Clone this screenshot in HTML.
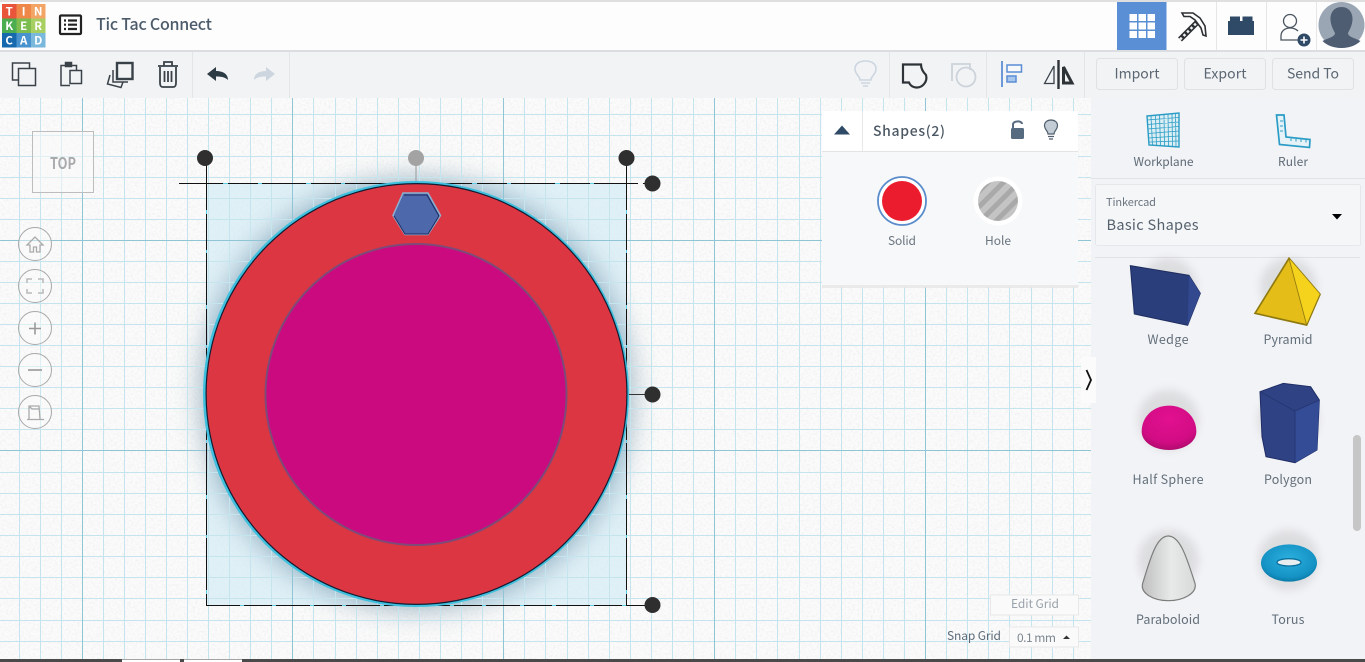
<!DOCTYPE html>
<html><head><meta charset="utf-8"><title>Tic Tac Connect</title>
<style>
html,body{margin:0;padding:0;width:1365px;height:662px;overflow:hidden;background:#f9f9f9}
svg{position:absolute;left:0;top:0;display:block}
text{font-family:"Noto Sans CJK JP","Liberation Sans",sans-serif}
</style></head><body>
<svg width="1365" height="662" viewBox="0 0 1365 662" xmlns="http://www.w3.org/2000/svg">
<defs>
<filter id="noise" x="0" y="0" width="100%" height="100%"><feTurbulence type="fractalNoise" baseFrequency="0.45" numOctaves="2" seed="4"/><feColorMatrix values="0 0 0 0 0.68  0 0 0 0 0.68  0 0 0 0 0.68  0.4 0.4 0 0 -0.34"/></filter>
<filter id="bl" x="-30%" y="-30%" width="160%" height="160%"><feGaussianBlur stdDeviation="14"/></filter>
<pattern id="st" width="11" height="11" patternUnits="userSpaceOnUse" patternTransform="rotate(45)"><rect width="11" height="11" fill="#c4c4c4"/><rect width="5" height="11" fill="#a9a9a9"/></pattern>
<radialGradient id="tor" cx="50%" cy="40%" r="60%"><stop offset="0" stop-color="#2bb0de"/><stop offset=".8" stop-color="#1492c4"/><stop offset="1" stop-color="#0a7aa8"/></radialGradient>
<radialGradient id="hs" cx="50%" cy="30%" r="75%"><stop offset="0" stop-color="#e2108f"/><stop offset=".7" stop-color="#d20c84"/><stop offset="1" stop-color="#a80a68"/></radialGradient>
<linearGradient id="par" x1="0" y1="0" x2="1" y2="0"><stop offset="0" stop-color="#bfbfbf"/><stop offset=".55" stop-color="#e8eaea"/><stop offset="1" stop-color="#d8d9d9"/></linearGradient>
</defs>

<!-- canvas -->
<rect x="0" y="98" width="1091" height="564" fill="#fbfbfb"/>
<rect x="0" y="98" width="1091" height="564" filter="url(#noise)"/>

<!-- selection fill and glow -->
<rect x="206" y="183" width="421" height="422" fill="#cfeaf5" opacity=".6"/>
<circle cx="416.500" cy="394" r="215" fill="#547f98" opacity=".6" filter="url(#bl)"/>

<!-- grid -->
<path shape-rendering="crispEdges" fill="none" stroke="#c4e5ed" stroke-width="1" d="M19.500 98V662M40.500 98V662M61.500 98V662M103.500 98V662M124.500 98V662M145.500 98V662M166.500 98V662M187.500 98V662M208.500 98V662M229.500 98V662M250.500 98V662M271.500 98V662M313.500 98V662M335.500 98V662M356.500 98V662M377.500 98V662M398.500 98V662M419.500 98V662M440.500 98V662M461.500 98V662M482.500 98V662M524.500 98V662M545.500 98V662M567.500 98V662M588.500 98V662M609.500 98V662M630.500 98V662M651.500 98V662M672.500 98V662M693.500 98V662M735.500 98V662M756.500 98V662M777.500 98V662M799.500 98V662M820.500 98V662M841.500 98V662M862.500 98V662M883.500 98V662M904.500 98V662M946.500 98V662M967.500 98V662M988.500 98V662M1009.500 98V662M1031.500 98V662M1052.500 98V662M1073.500 98V662
M0 114.500H1091M0 135.500H1091M0 156.500H1091M0 177.500H1091M0 198.500H1091M0 219.500H1091M0 261.500H1091M0 282.500H1091M0 303.500H1091M0 324.500H1091M0 345.500H1091M0 366.500H1091M0 387.500H1091M0 408.500H1091M0 429.500H1091M0 472.500H1091M0 493.500H1091M0 514.500H1091M0 535.500H1091M0 556.500H1091M0 577.500H1091M0 598.500H1091M0 620.500H1091M0 641.500H1091"/>
<path shape-rendering="crispEdges" fill="none" stroke="#8fc5d5" stroke-width="1" d="M82.500 98V662M292.500 98V662M503.500 98V662M714.500 98V662M925.500 98V662M0 240.500H1091M0 450.500H1091"/>

<!-- selection lines -->
<g fill="none" stroke-width="1" shape-rendering="crispEdges">
<path d="M206.500 183.500H626.500M206.500 183.500V605.500M626.500 183.500V605.500M206.500 605.500H626.500" stroke="#5fd0e6"/>
<path d="M179 183.500H652" stroke="#111" stroke-dasharray="44 5 30 4"/>
<path d="M206.500 158V606" stroke="#111" stroke-dasharray="52 4 36 3"/>
<path d="M626.500 158V606" stroke="#111" stroke-dasharray="52 4 36 3"/>
<path d="M206 605.500H652" stroke="#111" stroke-dasharray="34 4 28 4"/>
<path d="M627 394.500H652" stroke="#333"/>
</g>
<path d="M416 165V183" stroke="#999" stroke-width="1"/>
<circle cx="416" cy="394" r="213" fill="#3fc0de"/>
<circle cx="416.500" cy="394" r="211" fill="#111d33"/>
<circle cx="416.500" cy="394" r="209.800" fill="#dc3642"/>
<circle cx="416" cy="394.500" r="150.500" fill="#cb0a80" stroke="#7e4a78" stroke-width="2"/>
<path d="M403 193H428L440.500 215.500L428 234.500H405L393 215.500Z" fill="#4d68ab" stroke="#8fb0cf" stroke-width="1.500"/>
<path d="M404 195H427L439 216L428 234H405L394 216" fill="none" stroke="#1b2a60" stroke-width="1"/>
<g fill="#2f2f2f"><circle cx="205" cy="158" r="8"/><circle cx="626.500" cy="158" r="8"/><circle cx="652.500" cy="183.500" r="8"/><circle cx="652.500" cy="394.500" r="8"/><circle cx="652.500" cy="605" r="8"/></g>
<circle cx="416" cy="158" r="8" fill="#a3a3a3"/>

<!-- view cube + controls -->
<rect x="32.500" y="131.500" width="61" height="61" fill="#fafafa" fill-opacity=".5" stroke="#bdbdbd"/>
<text x="63" y="169" font-size="16" font-weight="700" fill="#a8aaac" text-anchor="middle" textLength="26" lengthAdjust="spacingAndGlyphs">TOP</text>
<g fill="#fafafa" fill-opacity=".45" stroke="#a8a8a8"><circle cx="35" cy="244" r="16.500"/><circle cx="35" cy="286" r="16.500"/><circle cx="35" cy="328" r="16.500"/><circle cx="35" cy="370" r="16.500"/><circle cx="35" cy="412" r="16.500"/></g>
<g fill="none" stroke="#aaa" stroke-width="1.300">
<path d="M27 245L35 237L43 245H40V252H36.500V247H33.500V252H30V245Z"/>
<path d="M27 283V279H32M38 279H43V283M43 289V293H38M32 293H27V289" stroke="#bbb" stroke-width="1.600"/>
<path d="M29 328.500H41M35 322.500V334.500" stroke="#999" stroke-width="1.600"/>
<path d="M28 370H42" stroke="#999" stroke-width="1.600"/>
<path d="M27 419.500H44M29 419V406H39L40 419M29 406L32 409H39" />
</g>

<!-- grid controls -->
<rect x="990.500" y="595" width="88" height="20" fill="#fafafa" stroke="#e8e8e8"/>
<text x="1035" y="608" font-size="12" fill="#9aa3ac" text-anchor="middle" textLength="48">Edit Grid</text>
<text x="947" y="640" font-size="12" fill="#5d6b78" textLength="54">Snap Grid</text>
<rect x="1009.500" y="627" width="69" height="20" fill="#fafafa" stroke="#e8e8e8"/>
<text x="1017" y="642" font-size="12" fill="#7d8790" textLength="39">0.1 mm</text>
<path d="M1063 639L1066.500 635.500L1070 639Z" fill="#333"/>

<!-- header -->
<rect x="0" y="0" width="1365" height="51" fill="#fdfdfd"/>
<rect x="0" y="0" width="1365" height="2" fill="#dfdfdf"/>
<rect x="0" y="50" width="1365" height="2" fill="#dcdde0"/>
<!-- logo -->
<g font-size="11.500" font-weight="700" fill="#fff" text-anchor="middle">
<rect x="2" y="4" width="14.500" height="14.500" fill="#e8553a"/><rect x="16.500" y="4" width="14.500" height="14.500" fill="#ef8748"/><rect x="31" y="4" width="14.500" height="14.500" fill="#f3a566"/>
<rect x="2" y="18.500" width="14.500" height="14.500" fill="#4cac50"/><rect x="16.500" y="18.500" width="14.500" height="14.500" fill="#7dbd4f"/><rect x="31" y="18.500" width="14.500" height="14.500" fill="#a8cf62"/>
<rect x="2" y="33" width="14.500" height="14.500" fill="#1769ad"/><rect x="16.500" y="33" width="14.500" height="14.500" fill="#4893ce"/><rect x="31" y="33" width="14.500" height="14.500" fill="#7ab8dc"/>
<text x="9.200" y="15.500">T</text><text x="23.700" y="15.500">I</text><text x="38.200" y="15.500">N</text>
<text x="9.200" y="30">K</text><text x="23.700" y="30">E</text><text x="38.200" y="30">R</text>
<text x="9.200" y="44.500">C</text><text x="23.700" y="44.500">A</text><text x="38.200" y="44.500">D</text>
</g>
<rect x="60" y="15.500" width="21" height="18.500" rx="1" fill="none" stroke="#222" stroke-width="2.200"/>
<path d="M64 20.500H66M68 20.500H77M64 24.700H66M68 24.700H77M64 29H66M68 29H77" stroke="#222" stroke-width="2.200"/>
<text x="96" y="30" font-size="16" font-weight="500" fill="#4c5b6a" textLength="116">Tic Tac Connect</text>

<!-- header right -->
<path d="M1216.500 2V50M1266.500 2V50M1316.500 2V50" stroke="#e6e6e6"/>
<rect x="1117" y="2" width="49.500" height="48" fill="#5a8ed5"/>
<g fill="#fff"><rect x="1129.500" y="14" width="7.500" height="7"/><rect x="1138.500" y="14" width="7.500" height="7"/><rect x="1147.500" y="14" width="7.500" height="7"/><rect x="1129.500" y="22.500" width="7.500" height="7"/><rect x="1138.500" y="22.500" width="7.500" height="7"/><rect x="1147.500" y="22.500" width="7.500" height="7"/><rect x="1129.500" y="31" width="7.500" height="7"/><rect x="1138.500" y="31" width="7.500" height="7"/><rect x="1147.500" y="31" width="7.500" height="7"/></g>
<path d="M1180 39.500L1197 22.500" stroke="#2c2f33" stroke-width="5.500"/><path d="M1180 39.500L1197 22.500" stroke="#f2f2f2" stroke-width="2.500" stroke-dasharray="2.500 2.500"/>
<path d="M1182 13H1193L1200 18L1205 26L1206 36L1203 35L1201 28L1195 20L1190 16.500H1184Z" fill="#fff" stroke="#2c2f33" stroke-width="1.600"/>
<path d="M1228 21H1230V16.500H1240V21H1242.500V16.500H1252.500V21H1254V35H1228Z" fill="#2f4a66"/>
<circle cx="1290" cy="21" r="6.500" fill="none" stroke="#4a5560" stroke-width="1.300"/>
<path d="M1301 40H1281V36C1281 31 1285 28 1290 28C1293 28 1296 29 1298 31" fill="none" stroke="#4a5560" stroke-width="1.300"/>
<circle cx="1304" cy="40" r="6.500" fill="#2f4a66"/><path d="M1300.500 40H1307.500M1304 36.500V43.500" stroke="#fff" stroke-width="1.600"/>
<circle cx="1341.500" cy="25" r="23" fill="#9aa6b4"/>
<path d="M1341.500 7C1334 7 1330 13 1330.500 20C1331 26 1333.500 30 1335 33C1335 37 1328 38 1322.500 41C1327 45.500 1334 48 1341.500 48C1349 48 1356 45.500 1360.500 41C1355 38 1348 37 1348 33C1349.500 30 1352 26 1352.500 20C1353 13 1349 7 1341.500 7Z" fill="#4f5d73"/>

<!-- toolbar -->
<rect x="0" y="52" width="1365" height="46" fill="#f2f3f5"/>
<path d="M192.500 52V98M289.500 52V98M889.500 52V98M986.500 52V98M1084.500 52V98" stroke="#e4e5e8"/>
<g fill="none" stroke="#3a4249" stroke-width="1.500">
<rect x="12.500" y="63" width="17" height="17"/><rect x="18.500" y="68.500" width="17" height="17" fill="#f2f3f5"/>
<path d="M76.500 70V65.500H61V85.500H70"/><rect x="70" y="70.500" width="11.500" height="13"/><rect x="65.500" y="62.500" width="6" height="4" fill="#3a4249"/>
<path d="M110 75L107.500 84L121 87.500L123 82" /><path d="M113 70V82H128"/><rect x="117" y="63" width="15.500" height="16" stroke-width="2.400"/>
<path d="M158 66H178M160 67V83C160 86 161 87 163 87H173C175 87 176 86 176 83V67M164 66V62H172V66M164.500 71V82M168 71V82M171.500 71V82" stroke-width="1.800"/>
</g>
<path d="M207 74L216 67V71C223 71 228 74 228 80C225 77 221 76.500 216 76.500V81Z" fill="#2d3b45"/>
<path d="M275 74L266 67V71C259 71 254 74 254 80C257 77 261 76.500 266 76.500V81Z" fill="#cdd6de"/>
<!-- right toolbar icons -->
<g fill="none" stroke="#ccd6e0" stroke-width="1.600"><path d="M860 80C860 76 855 74.500 855 69C855 64 859 61 865.500 61C872 61 876 64 876 69C876 74.500 871 76 871 80Z"/><path d="M861 83H870M863 86H868"/></g>
<path d="M903 64.500H921C921 69 923 72 926 75C928 82 922 88 916 87.500C912 87 910 85 909 82.500H903Z" fill="none" stroke="#2e3338" stroke-width="2.200"/>
<g fill="none" stroke="#ccd3da" stroke-width="1.800"><path d="M952 81V64H970V70"/><circle cx="966" cy="77" r="9.500"/></g>
<path d="M1002 61V87" stroke="#5a8ed5" stroke-width="1.800"/><rect x="1007" y="65" width="14.500" height="7" fill="#fff" fill-opacity=".4" stroke="#5a8ed5" stroke-width="1.500"/><rect x="1007" y="76" width="9" height="6" fill="#a9c6ec" stroke="#5a8ed5" stroke-width="1.500"/>
<path d="M1058.500 60V89" stroke="#2e3338" stroke-width="2.400"/><path d="M1044.500 83.500L1054 66V83.500Z" fill="none" stroke="#3a4249" stroke-width="1.300"/><path d="M1063.500 67V83H1072Z" fill="#f2f3f5" stroke="#2e3338" stroke-width="3"/>
<g fill="#f2f3f5" stroke="#e0e1e4"><rect x="1096.500" y="58.500" width="81" height="31" rx="3"/><rect x="1184.500" y="58.500" width="81" height="31" rx="3"/><rect x="1272.500" y="58.500" width="81" height="31" rx="3"/></g>
<g font-size="14" fill="#5a6672" text-anchor="middle"><text x="1137" y="78.500" textLength="45">Import</text><text x="1225" y="78.500" textLength="43">Export</text><text x="1313" y="78.500" textLength="52">Send To</text></g>

<!-- inspector -->
<rect x="822" y="111" width="256" height="176" fill="#f7f8f9"/>
<rect x="822" y="285" width="256" height="3" fill="#e4e4e4" opacity=".7"/>
<rect x="822" y="111" width="256" height="40" fill="#fff"/>
<path d="M822 151.500H1078" stroke="#e3e4e6"/><path d="M862.500 111V151" stroke="#e8e8e8"/>
<path d="M834 134.500L842 125.500L850 134.500Z" fill="#2f4a66"/>
<text x="873" y="136" font-size="14" font-weight="500" fill="#4b5763" textLength="72">Shapes(2)</text>
<rect x="1011" y="128" width="13" height="11" rx="1.500" fill="#566a80"/><path d="M1013 128V124.500C1013 120.500 1022 120.500 1022 124" fill="none" stroke="#566a80" stroke-width="2"/>
<path d="M1048 134C1048 131 1044.500 129.500 1044.500 125.500C1044.500 122 1047.500 120 1051 120C1054.500 120 1057.500 122 1057.500 125.500C1057.500 129.500 1054 131 1054 134Z" fill="#c3ccd4" stroke="#4f5e6d" stroke-width="1.200"/><path d="M1048 136.500H1054M1049 139H1053" stroke="#4f5e6d" stroke-width="1.200"/>
<circle cx="902" cy="201" r="24" fill="#fff" stroke="#5a8ccb" stroke-width="1.800"/><circle cx="902" cy="201" r="20" fill="#ec1c2f"/>
<circle cx="998" cy="201" r="24.500" fill="#fff"/><circle cx="998" cy="201" r="20" fill="url(#st)"/>
<g font-size="12" fill="#6a7580" text-anchor="middle"><text x="902" y="245" textLength="28">Solid</text><text x="998" y="245" textLength="26">Hole</text></g>

<!-- right panel -->
<rect x="1091" y="98" width="274" height="564" fill="#f2f3f6"/>
<rect x="1081" y="357" width="15" height="46" fill="#fbfbfb"/>
<path d="M1086.500 370L1091 380L1086.500 390" fill="none" stroke="#111" stroke-width="1.800"/>
<g fill="none" stroke="#2a9cc5" stroke-width="1.400">
<path d="M1147 116L1179 113V147L1149 145Z" fill="#dbeef4"/>
<path d="M1147 120L1179 117.500M1147.300 124.500L1179 122M1147.500 129L1179 126.500M1148 133.500L1179 131M1148.200 138L1179 136M1148.500 142L1179 141M1151 115.800L1152.500 145.500M1155.500 115.500L1156.500 146M1159.500 115L1160.500 146M1164 114.800L1164.500 146M1168 114.200L1168.500 146.500M1172 114L1172.500 146.500M1175.500 113.500L1176 147" stroke-width=".8"/>
</g>
<path d="M1276.500 115H1284L1286 137L1310 139.500L1309.500 147.500L1279.500 144.500Z" fill="#e5f2f7" stroke="#2a9cc5" stroke-width="1.700"/>
<path d="M1280 121H1283M1280 126H1283M1280 131H1283M1291 141V138.500M1296 141.500V139M1301 142V139.500M1306 142.500V140" stroke="#2a9cc5" stroke-width="1"/>
<g font-size="12" fill="#5f6b77" text-anchor="middle"><text x="1163.500" y="166" textLength="60">Workplane</text><text x="1293" y="166" textLength="30">Ruler</text></g>
<path d="M1091 178.500H1365" stroke="#e1e2e5"/>
<rect x="1095.500" y="184.500" width="265" height="61" rx="2" fill="#f5f6f8" stroke="#e6e7ea"/>
<text x="1106" y="206" font-size="11" fill="#6a7580" textLength="50">Tinkercad</text>
<text x="1106.500" y="230" font-size="14.500" fill="#55616d" textLength="92">Basic Shapes</text>
<path d="M1332 214H1342L1337 219.500Z" fill="#000"/>
<path d="M1095 257.500H1360" stroke="#e1e2e5"/>
<rect x="1353" y="435" width="8" height="96" rx="4" fill="#c6c6c6"/>

<!-- shape thumbnails, drawn at 3x -->
<g transform="translate(1090 250) scale(.33333)">
<g fill="#000" opacity=".09" filter="url(#bl)"><circle cx="235" cy="110" r="85"/><circle cx="595" cy="110" r="85"/><circle cx="235" cy="510" r="90"/><circle cx="595" cy="510" r="90"/><circle cx="235" cy="930" r="90"/><circle cx="595" cy="930" r="90"/></g>
<path d="M121 47L297 76L331 130L293 226L133 192Z" fill="#2a3e7c" stroke="#1e2d60" stroke-width="3"/>
<path d="M297 76L331 130L293 226Z" fill="#32498f"/>
<path d="M597 25L495 190L650 225L690 133Z" fill="#e4bd18" stroke="#8f7a10" stroke-width="5"/>
<path d="M597 25L690 133L650 225Z" fill="#f5d21c"/><path d="M597 25L650 225L690 133" fill="none" stroke="#8f7a10" stroke-width="2.500"/>
<path d="M155 545C155 500 190 467 237 467C284 467 319 500 319 545C319 575 285 600 237 600C190 600 155 575 155 545Z" fill="url(#hs)"/>
<path d="M510 425L580 400L662 410L688 450L681 600L615 638L528 620L516 560Z" fill="#2f4284" stroke="#1f2d66" stroke-width="3"/>
<path d="M615 483L688 450L681 600L615 638Z" fill="#344b96"/>
<path d="M510 425L615 483L688 450M615 483V638" fill="none" stroke="#24356f" stroke-width="2.500"/>
<path d="M235 858C272 858 292 930 315 1000C322 1030 280 1052 235 1052C190 1052 150 1030 158 1000C180 930 198 858 235 858Z" fill="url(#par)" stroke="#7c7c7c" stroke-width="3.500"/>
<ellipse cx="597" cy="939" rx="84" ry="56" fill="url(#tor)"/>
<ellipse cx="597" cy="937" rx="36" ry="11" fill="#e8eef0" stroke="#0a6f9c" stroke-width="4"/>
</g>
<g font-size="12.500" fill="#626e7a" text-anchor="middle">
<text x="1168" y="344" textLength="41">Wedge</text><text x="1288" y="344" textLength="49">Pyramid</text>
<text x="1168" y="484" textLength="71">Half Sphere</text><text x="1288" y="484" textLength="48">Polygon</text>
<text x="1168" y="624" textLength="64">Paraboloid</text><text x="1288" y="624" textLength="33">Torus</text>
</g>

<!-- bottom strip -->
<rect x="0" y="659" width="1365" height="3" fill="#4a4a4a"/>
<rect x="122" y="659.500" width="58" height="3" fill="#fff"/><rect x="184" y="659.500" width="58" height="3" fill="#fff"/>
</svg>
</body></html>
